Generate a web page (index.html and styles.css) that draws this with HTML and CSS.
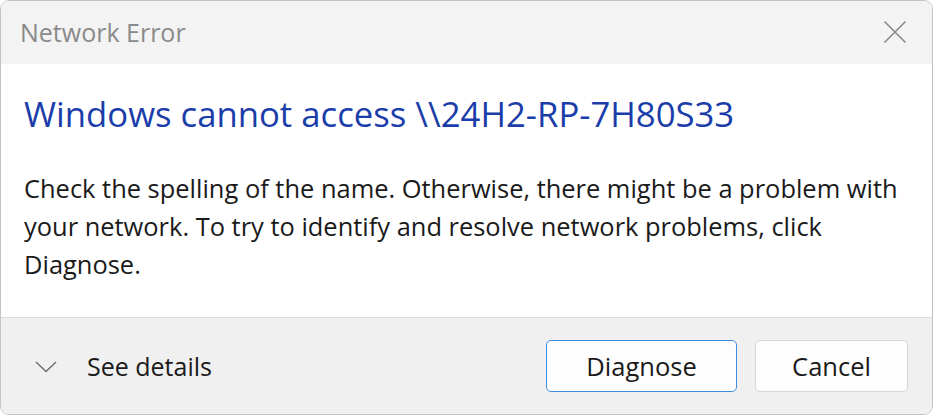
FILE: index.html
```html
<!DOCTYPE html>
<html>
<head>
<meta charset="utf-8">
<link rel="stylesheet" href="styles.css">
</head>
<body>
<div class="window">
  <div class="titlebar">
    <span class="title">Network Error</span>
    <span class="close">
      <svg width="24" height="24" viewBox="0 0 24 24"><path d="M1.5 1.5 L22.5 22.5 M22.5 1.5 L1.5 22.5" stroke="#8a8a8a" stroke-width="1.6" fill="none"/></svg>
    </span>
  </div>
  <div class="content">
    <h1 class="heading">Windows cannot access \\24H2-RP-7H80S33</h1>
    <p class="message">Check the spelling of the name. Otherwise, there might be a problem with your network. To try to identify and resolve network problems, click Diagnose.</p>
  </div>
  <div class="footer">
    <div class="details">
      <svg class="chevron" width="22" height="12" viewBox="0 0 22 12"><path d="M1 1 L11 10.5 L21 1" stroke="#707070" stroke-width="1.5" fill="none"/></svg>
      <span>See details</span>
    </div>
    <div class="buttons">
      <button class="btn primary">Diagnose</button>
      <button class="btn">Cancel</button>
    </div>
  </div>
</div>
</body>
</html>
```
FILE: styles.css
```css
html, body {
  margin: 0;
  padding: 0;
  background: #ffffff;
}
body {
  font-family: "Open Sans", "Noto Sans", sans-serif;
  width: 933px;
  height: 415px;
  overflow: hidden;
}
.window {
  box-sizing: border-box;
  width: 933px;
  height: 415px;
  border: 1px solid #c4c4c4;
  border-radius: 9px;
  overflow: hidden;
  display: flex;
  flex-direction: column;
  background: #fff;
}
.titlebar {
  height: 63px;
  background: #f3f3f3;
  display: flex;
  align-items: center;
  justify-content: space-between;
  padding: 0 25px 0 19px;
  flex: none;
}
.title {
  font-size: 25px;
  color: #8a8a8a;
  margin-top: -2px;
}
.close {
  display: flex;
  margin-top: -2px;
}
.content {
  flex: 1;
  background: #fff;
  padding: 0 23px;
}
.heading {
  margin: 29px 0 0;
  font-weight: normal;
  font-size: 34.7px;
  line-height: 42px;
  color: #1b3daa;
}
.message {
  margin: 34px 0 0;
  font-size: 25.45px;
  line-height: 38px;
  color: #1a1a1a;
}
.footer {
  height: 96px;
  flex: none;
  background: #f0f0f0;
  border-top: 1px solid #dcdcdc;
  display: flex;
  align-items: center;
  justify-content: space-between;
  padding: 0 24px 0 34px;
}
.details {
  display: flex;
  align-items: center;
  gap: 30px;
  font-size: 25px;
  color: #1a1a1a;
}
.chevron {
  margin-top: 2px;
}
.buttons {
  display: flex;
  gap: 18px;
}
.btn {
  font-family: inherit;
  font-size: 25.5px;
  color: #1a1a1a;
  height: 52px;
  background: #fdfdfd;
  border: 1px solid #d6d6d6;
  border-radius: 5px;
  width: 153px;
  padding: 0;
}
.btn.primary {
  width: 191px;
  border: 1.5px solid #3f8de0;
}
```
